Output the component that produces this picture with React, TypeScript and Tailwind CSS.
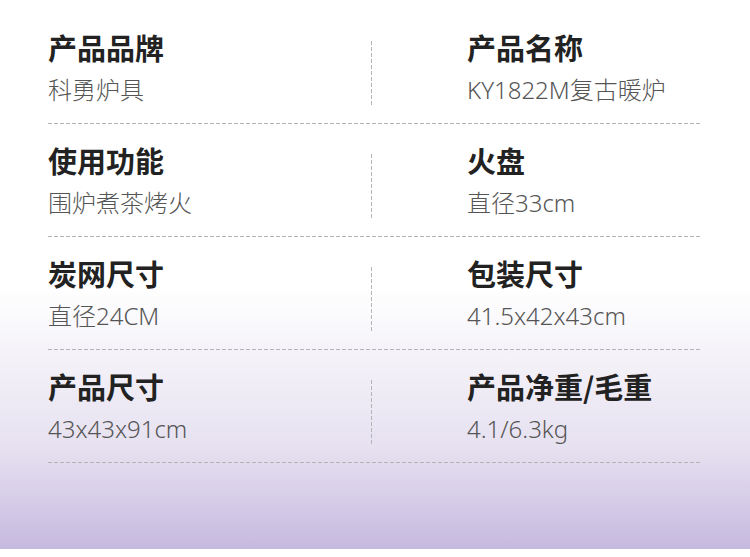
import React from "react";

type Spec = { label: string; value: string };

const rows: [Spec, Spec][] = [
  [
    { label: "产品品牌", value: "科勇炉具" },
    { label: "产品名称", value: "KY1822M复古暖炉" },
  ],
  [
    { label: "使用功能", value: "围炉煮茶烤火" },
    { label: "火盘", value: "直径33cm" },
  ],
  [
    { label: "炭网尺寸", value: "直径24CM" },
    { label: "包装尺寸", value: "41.5x42x43cm" },
  ],
  [
    { label: "产品尺寸", value: "43x43x91cm" },
    { label: "产品净重/毛重", value: "4.1/6.3kg" },
  ],
];

function Cell({ spec }: { spec: Spec }) {
  return (
    <div className="pt-[22px]">
      <p className="text-[29px] leading-none font-bold text-[#222222] font-['Noto_Sans_CJK_SC',sans-serif]">
        {spec.label}
      </p>
      <p className="mt-[16px] text-[24px] leading-none font-light text-[#555555] font-['Noto_Sans','Noto_Sans_CJK_SC',sans-serif]">
        {spec.value}
      </p>
    </div>
  );
}

export default function App() {
  return (
    <div className="w-[750px] h-[557px] bg-white overflow-hidden">
      <div className="h-[549px] bg-[linear-gradient(to_bottom,#ffffff_0%,#ffffff_52%,#f5f3f9_64%,#e6e0f0_82%,#c6b9df_100%)] pt-[11px] pl-[48px]">
        <div className="w-[652px]">
          {rows.map(([left, right], i) => (
            <div key={i}>
              <div className="flex h-[112px]">
                <div className="w-[323px]">
                  <Cell spec={left} />
                </div>
                <div className="mt-[30px] h-[66px] w-px bg-[repeating-linear-gradient(to_bottom,#b4b4b4_0_4px,transparent_4px_6px)]" />
                <div className="pl-[95px]">
                  <Cell spec={right} />
                </div>
              </div>
              <div className="h-px bg-[repeating-linear-gradient(to_right,#b4b4b4_0_4px,transparent_4px_6px)]" />
            </div>
          ))}
        </div>
      </div>
    </div>
  );
}
